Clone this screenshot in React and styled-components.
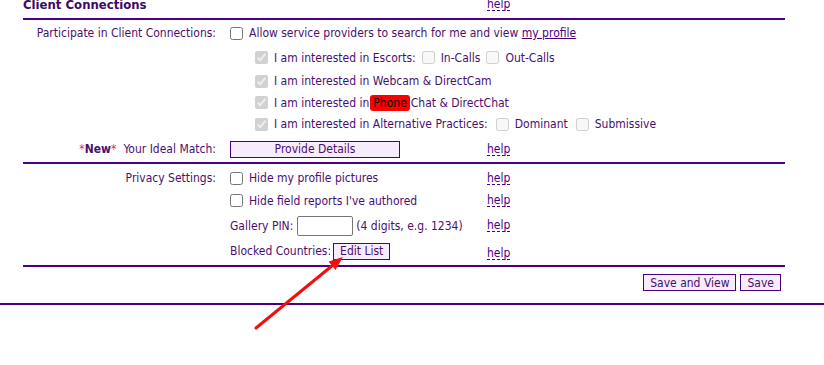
import React from "react";
import styled, { createGlobalStyle } from "styled-components";

const Global = createGlobalStyle`
  html, body { margin: 0; padding: 0; background: #fff; }
  body {
    font-family: "DejaVu Sans Condensed", "DejaVu Sans", Verdana, sans-serif;
    font-stretch: condensed;
    font-size: 12px;
    color: #4a0f6e;
    overflow: hidden;
  }
`;

const Page = styled.div`
  position: relative;
  width: 824px;
  height: 365px;
  margin-top: -10px;
`;

const Section = styled.div`
  margin: 0 39px 0 23px;
`;

const HeaderRow = styled.div`
  display: grid;
  grid-template-columns: 464px 1fr;
  align-items: center;
  height: 28px;
  border-bottom: 2px solid #4b0082;
`;

const Title = styled.h2`
  margin: 0;
  font-size: 13px;
  font-weight: bold;
  color: #3d0a63;
`;

const Group = styled.div`
  padding: ${(p) => p.$pad || "0"};
  border-bottom: ${(p) => (p.$line ? "2px solid #4b0082" : "none")};
`;

const Row = styled.div`
  display: grid;
  grid-template-columns: 207px 257px 1fr;
  align-items: center;
  min-height: ${(p) => p.$h || 22}px;
`;

const Label = styled.div`
  text-align: right;
  padding-right: 14px;
  white-space: nowrap;
`;

const Content = styled.div`
  display: flex;
  align-items: center;
  white-space: nowrap;
  padding-left: ${(p) => p.$indent || 0}px;
  ${(p) => (p.$wide ? "grid-column: 2 / 4;" : "")}
`;

const Check = styled.input.attrs({ type: "checkbox" })`
  width: 13px;
  height: 13px;
  margin: 0 6px 0 0;
  flex: none;
`;

const Opt = styled.span`
  margin-right: ${(p) => p.$mr || 0}px;
`;

const Gap = styled.span`
  display: inline-block;
  width: ${(p) => p.$w}px;
`;

const ProfileLink = styled.a`
  color: #4b0082;
  text-decoration: underline;
`;

const Help = styled.a`
  color: #4b0082;
  text-decoration: none;
  border-bottom: 1px dashed #4b0082;
  line-height: 12px;
  justify-self: start;
  ${(p) => (p.$dy ? `position: relative; top: ${p.$dy}px;` : "")}
`;

const Highlight = styled.span`
  background: #ff0000;
  color: #000;
  border-radius: 3px;
  padding: 1px 3px;
  margin: 0 1px 0 1px;
`;

const NewTag = styled.span`
  color: #e8312a;
  margin-right: 7px;
  b { color: #4a0f6e; }
`;

const Btn = styled.button`
  font-family: inherit;
  font-stretch: condensed;
  font-size: 12px;
  color: #4a0f6e;
  background: #f7ecfb;
  border: 1px solid #4b0082;
  border-radius: 0;
  padding: 0 6px;
  height: ${(p) => p.$h || 17}px;
  width: ${(p) => (p.$w ? `${p.$w}px` : "auto")};
  cursor: pointer;
`;

const PinInput = styled.input`
  width: 56px;
  height: 20px;
  box-sizing: border-box;
  border: 1px solid #767676;
  border-radius: 2px;
  margin: 0 3px 0 4px;
  padding: 0;
`;

const Actions = styled.div`
  display: flex;
  justify-content: flex-end;
  gap: 4px;
  padding: 7px 4px 0 0;
  height: 30px;
  box-sizing: border-box;
`;

const BottomRule = styled.div`
  border-bottom: 2px solid #4b0082;
  margin-top: 6px;
`;

const Arrow = styled.svg`
  position: absolute;
  left: 0;
  top: 10px;
  pointer-events: none;
`;

export default function App() {
  return (
    <>
      <Global />
      <Page>
        <Section>
          <HeaderRow>
            <Title>Client Connections</Title>
            <Help href="#">help</Help>
          </HeaderRow>

          <Group $pad="1px 0 1px 0">
            <Row $h={24}>
              <Label>Participate in Client Connections:</Label>
              <Content $wide>
                <Check />
                Allow service providers to search for me and view&nbsp;
                <ProfileLink href="#">my profile</ProfileLink>
              </Content>
            </Row>
            <Row $h={25}>
              <span />
              <Content $wide $indent={25}>
                <Check defaultChecked disabled />
                <Opt $mr={6}>I am interested in Escorts:</Opt>
                <Check disabled />
                <Opt $mr={6}>In-Calls</Opt>
                <Check disabled />
                <Opt>Out-Calls</Opt>
              </Content>
            </Row>
            <Row $h={22}>
              <span />
              <Content $wide $indent={25}>
                <Check defaultChecked disabled />
                I am interested in Webcam &amp; DirectCam
              </Content>
            </Row>
            <Row $h={21}>
              <span />
              <Content $wide $indent={25}>
                <Check defaultChecked disabled />
                I am interested in<Highlight>Phone</Highlight>Chat &amp; DirectChat
              </Content>
            </Row>
            <Row $h={22}>
              <span />
              <Content $wide $indent={25}>
                <Check defaultChecked disabled />
                <Opt $mr={8}>I am interested in Alternative Practices:</Opt>
                <Check disabled />
                <Opt $mr={8}>Dominant</Opt>
                <Check disabled />
                <Opt>Submissive</Opt>
              </Content>
            </Row>
          </Group>

          <Group $line $pad="0">
            <Row $h={26}>
              <Label>
                <NewTag>
                  *<b>New</b>*
                </NewTag>
                Your Ideal Match:
              </Label>
              <Content>
                <Btn type="button" $w={170}>Provide Details</Btn>
              </Content>
              <Help href="#">help</Help>
            </Row>
          </Group>

          <Group $line $pad="3px 0 2px 0">
            <Row $h={22}>
              <Label>Privacy Settings:</Label>
              <Content>
                <Check />
                Hide my profile pictures
              </Content>
              <Help href="#">help</Help>
            </Row>
            <Row $h={23}>
              <span />
              <Content>
                <Check />
                Hide field reports I've authored
              </Content>
              <Help href="#">help</Help>
            </Row>
            <Row $h={27}>
              <span />
              <Content>
                Gallery PIN:
                <PinInput type="text" />
                (4 digits, e.g. 1234)
              </Content>
              <Help href="#">help</Help>
            </Row>
            <Row $h={24}>
              <span />
              <Content>
                Blocked Countries:
                <Gap $w={2} />
                <Btn type="button">Edit List</Btn>
              </Content>
              <Help href="#" $dy={2}>help</Help>
            </Row>
          </Group>

          <Actions>
            <Btn type="button">Save and View</Btn>
            <Btn type="button">Save</Btn>
          </Actions>
        </Section>
        <BottomRule />

        <Arrow width="824" height="365" viewBox="0 0 824 365">
          <line x1="256" y1="328" x2="333" y2="265" stroke="#f01010" strokeWidth="3" strokeLinecap="round" />
          <polygon points="343,257 335.5,270 328.5,261.5" fill="#f01010" />
        </Arrow>
      </Page>
    </>
  );
}
